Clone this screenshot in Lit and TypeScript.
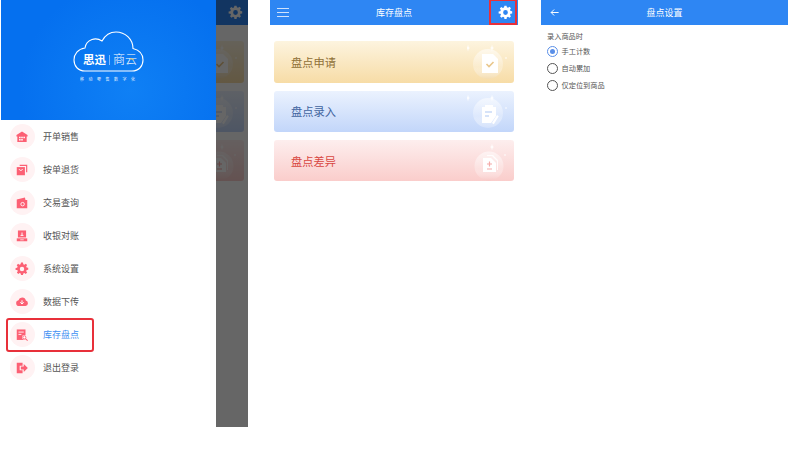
import { LitElement, html, css, svg } from "lit";
import { customElement, property } from "lit/decorators.js";

const gearPath =
  "M10.3 1h3.4l.5 2.7 1.9.8 2.3-1.6 2.4 2.4-1.6 2.3.8 1.9 2.7.5v3.4l-2.7.5-.8 1.9 1.6 2.3-2.4 2.4-2.3-1.6-1.9.8-.5 2.7h-3.4l-.5-2.7-1.9-.8-2.3 1.6-2.4-2.4 1.6-2.3-.8-1.9L1 13.7v-3.4l2.7-.5.8-1.9-1.6-2.3 2.4-2.4 2.3 1.6 1.9-.8zM12 8.2a3.8 3.8 0 1 0 0 7.6 3.8 3.8 0 0 0 0-7.6z";

const gear = (cls: string) =>
  html`<svg class=${cls} viewBox="0 0 24 24"><path fill="currentColor" fill-rule="evenodd" d=${gearPath} /></svg>`;

const menuIcons = [
  svg`<path d="M12 2.500 2.500 8.500V11H4v9.500h16V11h1.500V8.500z"/><g fill="#fff"><rect x="7" y="11.500" width="2.600" height="2.600"/><rect x="10.700" y="11.500" width="2.600" height="2.600"/><rect x="14.400" y="11.500" width="2.600" height="2.600"/><rect x="7" y="15.500" width="2.600" height="2.600"/><rect x="10.700" y="15.500" width="2.600" height="2.600"/></g>`,
  svg`<path d="M8 3h13v13h-2V5H8z"/><path d="M3 7h14v14H3z"/><path d="M7 10.500c1 3 5 3 6 0" fill="none" stroke="#fff" stroke-width="1.500"/>`,
  svg`<path d="M3 6 17 2.500 18 7h3v14H3z"/><circle cx="13" cy="14" r="3" fill="none" stroke="#fff" stroke-width="1.500"/>`,
  svg`<path d="M5 2.500h14v12H5z"/><path d="M3 16h18v5H3z"/><path d="M9.500 11h5M12 6v5" stroke="#fff" stroke-width="1.600" fill="none"/><path d="M9 18.500h6" stroke="#fff" stroke-width="1.200"/>`,
  svg`<path fill-rule="evenodd" d=${gearPath}/>`,
  svg`<path d="M7 19a5 5 0 0 1-1-9.900 6.500 6.500 0 0 1 12.600.5A4.800 4.800 0 0 1 18 19z"/><path d="M12 9v6M9 12.500l3 3 3-3" fill="none" stroke="#fff" stroke-width="1.700"/>`,
  svg`<path d="M3 2.500h15v18H3z"/><path d="M6 7h9M6 11h5" stroke="#fff" stroke-width="1.500"/><circle cx="16" cy="16" r="4" fill="#fff"/><circle cx="16" cy="16" r="2.700" fill="none" stroke-width="1.500" stroke="#fc6074"/><path d="m18 18 3.500 3.500" stroke="#fc6074" stroke-width="1.800"/>`,
  svg`<path d="M3 3h10v5H8v8h5v5H3z"/><path d="M10 9.500h5V5l7 7-7 7v-4.500h-5z"/>`,
];

const menu = ["开单销售", "按单退货", "交易查询", "收银对账", "系统设置", "数据下传", "库存盘点", "退出登录"];

const spark = (x: number, y: number, s = 1) =>
  svg`<path fill="#fff" opacity=".9" transform="translate(${x} ${y}) scale(${s})" d="M0-3.500.7-.7 2 0 .7.7 0 3.500-.7.7-2 0-.7-.7z"/>`;

const art = [
  {
    c: [21, 23, 15],
    s: svg`${spark(1, 7)}${spark(25, 7)}<circle cx="39" cy="17" r=".8" fill="#fff"/>`,
    g: svg`<path d="M15 13h11l5 5v14H15z" fill="#fff"/><path d="m19.500 23 2.500 2.500 4.500-4.500" fill="none" stroke="#e9c78c" stroke-width="1.600"/>`,
  },
  {
    c: [21, 22, 15],
    s: svg`${spark(1, 7)}${spark(25, 7)}<circle cx="39" cy="17" r=".8" fill="#fff"/>`,
    g: svg`<path d="M15 16h3v-2h8v2h3v9l-5 7h-9z" fill="#fff"/><path d="M18 21h7M18 25h4" stroke="#c9daf8" stroke-width="1.500"/><path d="m25 32 5-8 1.800 1.200-5 8z" fill="#fff"/>`,
  },
  {
    c: [22, 26, 14.5],
    s: svg`${spark(25, 7)}<circle cx="38" cy="15" r=".8" fill="#fff"/>`,
    g: svg`<path d="M20 15h6l5 5v10h-1V21l-5-5h-5z" fill="#fff" opacity=".85"/><path d="M16 18h8l5 5v9H16z" fill="#fff"/><path d="M20 24h5M22.500 21.500v5M20 29h5" stroke="#f4aaa8" stroke-width="1.200"/>`,
  },
];

@customElement("stock-page")
class StockPage extends LitElement {
  @property({ type: Boolean }) bare = false;

  static styles = css`
    :host { display: block; width: 248px; height: 427px; background: #fff; font-family: "Noto Sans CJK SC", "Noto Sans", sans-serif; }
    header { height: 25px; background: #2e86f3; color: #fff; display: flex; align-items: center; justify-content: space-between; position: relative; padding: 0 5px 0 7px; }
    .menu { width: 12px; height: 9px; display: flex; flex-direction: column; justify-content: space-between; }
    .menu i { height: 1px; background: #cfe2fc; }
    .title { font-size: 9px; line-height: 25px; position: absolute; left: 0; right: 0; text-align: center; }
    .gear { width: 15px; height: 15px; color: #fff; display: block; position: relative; }
    .cards { display: flex; flex-direction: column; gap: 7.800px; padding: 16.400px 4px 0; }
    .card { height: 41.500px; border-radius: 3px; display: flex; align-items: center; justify-content: space-between; padding: 0 3px 0 17px; font-size: 11.250px; }
    .card svg { width: 44px; height: 41.500px; flex: none; margin-left: auto; }
    .a { background: linear-gradient(#fdf4df, #f7dca6); color: #8f7037; }
    .b { background: linear-gradient(#ebf2fe, #c2d6fa); color: #41649f; }
    .c { background: linear-gradient(#fdeeee, #facdcb); color: #d8463f; }
  `;
  render() {
    const cards = [
      ["盘点申请", "a", "#f3dcb0"],
      ["盘点录入", "b", "#d3e1fb"],
      ["盘点差异", "c", "#f8c9c7"],
    ];
    return html`
      <header>
        <div class="menu"><i></i><i></i><i></i></div>
        ${this.bare ? "" : html`<div class="title">库存盘点</div>`}
        ${gear("gear")}
      </header>
      <div class="cards">
        ${cards.map(
          ([t, c, tone], i) => html`<div class="card ${c}">
            ${this.bare ? "" : html`<span>${t}</span>`}
            <svg viewBox="0 0 44 41.500">
              <defs><linearGradient id="g${i}" x1="0" y1="0" x2="0" y2="1"><stop offset="0" stop-color="#fff" stop-opacity=".55"/><stop offset=".6" stop-color="#fff" stop-opacity=".25"/><stop offset="1" stop-color=${tone}/></linearGradient></defs>
              ${art[i].s}
              <circle cx=${art[i].c[0]} cy=${art[i].c[1]} r=${art[i].c[2]} fill="url(#g${i})"/>
              ${art[i].g}
            </svg>
          </div>`
        )}
      </div>
    `;
  }
}

@customElement("app-root")
class AppRoot extends LitElement {
  static styles = css`
    :host { display: flex; width: 791px; height: 450px; background: #fff; overflow: hidden; font-family: "Noto Sans CJK SC", "Noto Sans", sans-serif; }
    .first { position: relative; width: 248px; height: 427px; flex: none; overflow: hidden; }
    .scrim { position: absolute; inset: 0; background: rgba(0,0,0,.6); }
    .drawer { position: absolute; left: 0; top: 0; bottom: 0; width: 216px; background: #fff; }
    .hero { height: 120px; margin-left: 1px; background: radial-gradient(circle at 60% 75%, #0f80f5, #0570ef 70%); }
    .hero svg { display: block; width: 100px; height: 90px; padding: 20px 0 0 57px; }
    .list { display: flex; flex-direction: column; }
    .row { height: 33px; display: flex; align-items: center; gap: 8.500px; padding-left: 9.500px; font-size: 9px; color: #555; position: relative; }
    .dot { width: 25px; height: 25px; border-radius: 50%; background: #fff2f3; display: flex; align-items: center; justify-content: center; color: #fc6074; }
    .dot svg { width: 14px; height: 14px; fill: currentColor; }
    .on { color: #3f90f2; }
    .on::after { content: ""; position: absolute; left: 6px; top: 0; width: 87.500px; height: 33.500px; box-sizing: border-box; border: 2px solid #e8303a; border-radius: 3px; }
    .second { width: 248px; flex: none; margin-left: 22px; position: relative; height: 427px; }
    .mark { position: absolute; right: 1.500px; top: 0; width: 27.500px; height: 25px; box-sizing: border-box; border: 2px solid #e8303a; border-top-width: 1px; }
    .third { margin-left: 23px; width: 247px; flex: none; }
    .bar { height: 25px; background: #2e86f3; color: #fff; display: flex; align-items: center; position: relative; padding-left: 9px; }
    .bar svg { width: 9px; height: 9px; }
    .bar span { position: absolute; left: 0; right: 0; text-align: center; font-size: 9px; line-height: 25px; }
    .form { padding: 6px 0 0 6px; font-size: 7.200px; color: #555; }
    .form > div:first-child { line-height: 11.500px; }
    .opts { display: flex; flex-direction: column; }
    .opt { height: 17px; display: flex; align-items: center; gap: 3.500px; }
    .radio { width: 9px; height: 9px; border: 1px solid #555; border-radius: 50%; box-sizing: content-box; flex: none; display: flex; align-items: center; justify-content: center; }
    .radio.sel { border-color: #5a8fe8; }
    .radio.sel::before { content: ""; width: 5px; height: 5px; border-radius: 50%; background: #5a8fe8; }
  `;
  render() {
    return html`
      <div class="first">
        <stock-page bare></stock-page>
        <div class="scrim"></div>
        <div class="drawer">
          <div class="hero">
            <svg viewBox="0 0 100 90" font-family="Noto Sans CJK SC, sans-serif" fill="#fff">
              <path d="M27 51H74C81 51 85 46 85 40C85 34 81 30 75 28.500C75 19 67 12 58 12C52 12 47 15.500 44 21C41 19 37 18.500 34 19.500C30 21 27.500 24 27 28C20 29 16 34 16 40C16 46 20 51 27 51z" fill="none" stroke="#fff" stroke-width="1.100"/>
              <text x="25" y="44" font-size="11.500" font-weight="700">思迅</text>
              <path d="M51.500 35v10" stroke="#cfe2ff" stroke-width=".6"/>
              <text x="55" y="44" font-size="12" font-weight="300">商云</text>
              <path d="M72 38.500l4 1.500" stroke="#f0c34a" stroke-width=".9"/>
              <text x="22" y="61" font-size="4" letter-spacing="4.500" opacity=".9">移动零售数字化</text>
            </svg>
          </div>
          <div class="list">
            ${menu.map(
              (m, i) => html`<div class="row ${i === 6 ? "on" : ""}">
                <div class="dot"><svg viewBox="0 0 24 24">${menuIcons[i]}</svg></div>
                <span>${m}</span>
              </div>`
            )}
          </div>
        </div>
      </div>
      <div class="second">
        <stock-page></stock-page>
        <div class="mark"></div>
      </div>
      <div class="third">
        <div class="bar">
          <svg viewBox="0 0 12 12"><path d="M11.500 6H1.500M5.500 2 1.500 6l4 4" fill="none" stroke="#fff" stroke-width="1.300"/></svg>
          <span>盘点设置</span>
        </div>
        <div class="form">
          <div>录入商品时</div>
          <div class="opts">
            <div class="opt"><div class="radio sel"></div><span>手工计数</span></div>
            <div class="opt"><div class="radio"></div><span>自动累加</span></div>
            <div class="opt"><div class="radio"></div><span>仅定位到商品</span></div>
          </div>
        </div>
      </div>
    `;
  }
}
